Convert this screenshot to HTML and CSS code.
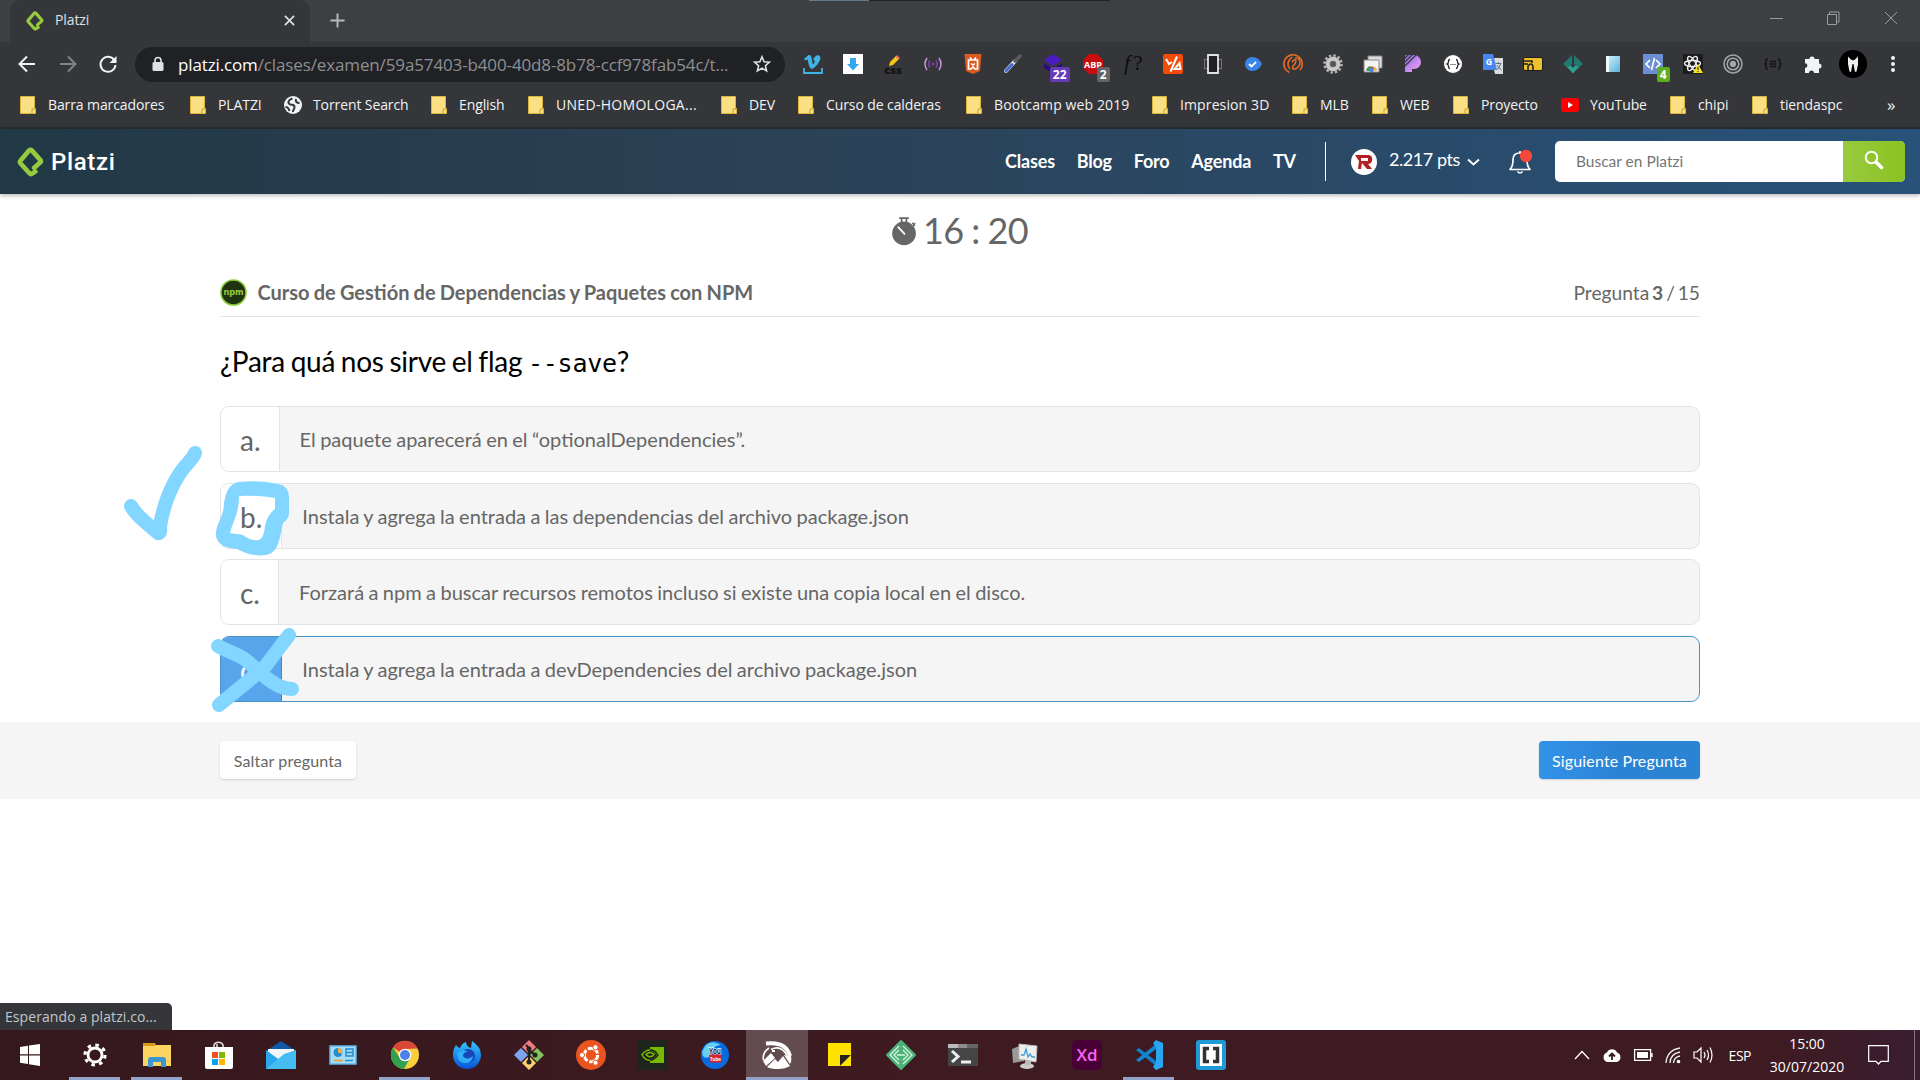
FILE: index.html
```html
<!DOCTYPE html>
<html lang="es">
<head>
<meta charset="utf-8">
<title>Platzi</title>
<link rel="stylesheet" href="styles.css">
</head>
<body>
<svg class="defs" width="0" height="0">
  <defs>
    <symbol id="platzi" viewBox="0 0 27 30"><path d="M17.200 20.800 L23.400 15.300 Q24.300 14.200 23.400 13.100 L15 3.600 Q13.500 2.200 12 3.600 L3.400 13.800 Q2.500 15 3.400 16.200 L12.400 26.200 Q14 27.800 15.600 26.200 L18.300 24.600" fill="none" stroke="#98ca3f" stroke-width="4.700" stroke-linejoin="round" stroke-linecap="round"/></symbol>
    <symbol id="folder" viewBox="0 0 16 18"><path d="M.5.500h14v12h1v5H.500z" fill="#fbe083" stroke="#d9b53c"/><path d="M12 17v-4h3" fill="none" stroke="#c9a227"/></symbol>
    <linearGradient id="peri" x1="0" y1="0" x2="1" y2="1"><stop offset="0" stop-color="#8b6cf0"/><stop offset="1" stop-color="#f6a6e8"/></linearGradient>
    <linearGradient id="fox" x1="0" y1="0" x2="0" y2="1"><stop offset="0" stop-color="#35c3ff"/><stop offset="1" stop-color="#0754d6"/></linearGradient>
    <linearGradient id="book" x1="0" y1="0" x2="1" y2="1"><stop offset="0" stop-color="#d8f3fb"/><stop offset="1" stop-color="#58b0dc"/></linearGradient>
  </defs>
</svg>

<header class="chrome">
  <div class="tabstrip">
    <div class="tab">
      <svg class="tab-logo" viewBox="0 0 27 30"><use href="#platzi"/></svg>
      <span class="tab-title">Platzi</span>
      <svg class="tab-close" viewBox="0 0 12 12"><path d="M1 1l10 10M11 1L1 11" stroke="#dfe1e5" stroke-width="1.800"/></svg>
    </div>
    <svg class="tab-new" viewBox="0 0 16 16"><path d="M8 .5v15M.5 8h15" stroke="#b8babd" stroke-width="2"/></svg>
    <div class="tab-drag"><i class="drag-a"></i><i class="drag-b"></i></div>
    <div class="win">
      <svg width="15" height="15"><path d="M0 8.500h13" stroke="#9a9c9e"/></svg>
      <svg width="15" height="15"><path d="M.5 4.500h9v10h-9zM2.500 4.500v-2.500h9.500v10h-2.500" fill="none" stroke="#9a9c9e"/></svg>
      <svg width="15" height="15"><path d="M1 2l12 12M13 2L1 14" stroke="#9a9c9e"/></svg>
    </div>
  </div>

  <div class="toolbar">
    <div class="nav">
      <svg viewBox="0 0 18 18"><path d="M17 9H2M9 1.500L1.500 9 9 16.500" fill="none" stroke="#f1f3f4" stroke-width="2"/></svg>
      <svg viewBox="0 0 18 18"><path d="M1 9h15M9 1.500L16.500 9 9 16.500" fill="none" stroke="#818386" stroke-width="2"/></svg>
      <svg viewBox="0 0 18 18"><path d="M15.500 5.500A7.500 7.500 0 1 0 16.500 10" fill="none" stroke="#f1f3f4" stroke-width="2"/><path d="M17.500 1v7h-7z" fill="#f1f3f4"/></svg>
    </div>
    <div class="omnibox">
      <svg class="lock" viewBox="0 0 12 16"><path d="M3 7V4.500a3 3 0 0 1 6 0V7" fill="none" stroke="#dfe1e5" stroke-width="1.600"/><rect x=".5" y="6" width="11" height="9" rx="1.500" fill="#dfe1e5"/></svg>
      <span class="url"><b>platzi.com</b>/clases/examen/59a57403-b400-40d8-8b78-ccf978fab54c/t...</span>
      <svg class="star" viewBox="0 0 18 18"><path d="M9 1.800l2.100 4.900 5.300.500-4 3.500 1.200 5.200L9 13.100l-4.600 2.800 1.200-5.200-4-3.500 5.300-.500z" fill="none" stroke="#dfe1e5" stroke-width="1.600"/></svg>
    </div>
    <div class="exts">
      <div class="ext"><svg viewBox="0 0 20 20"><path d="M1 5l4-3.500c3-1.500 3.500 1 4 5 .500 3 1 5 2 3s1-4-1-3c1-4 4-6 6-5s2 4-1 8c-3 4-5 6-7 5S5.500 9 4.500 5.500L2 6.500z" fill="#40b3e4"/><path d="M1 14v5h18v-5" fill="none" stroke="#40b3e4" stroke-width="1.800"/></svg></div>
      <div class="ext"><svg viewBox="0 0 20 20"><path d="M0 0h20v20H0z" fill="#fff"/><path d="M7 4h6v6h3l-6 6.500L4 10h3z" fill="#34a7ee"/></svg></div>
      <div class="ext"><svg viewBox="0 0 20 20"><path d="M6 12l1-4 6-6 3 3-6 6z" fill="#f5c518"/><path d="M12.500 2.500l1.500-1.500 3 3L15.500 5.500z" fill="#ef6a6a"/><text x="10" y="19.500" font-size="10" font-weight="800" text-anchor="middle" textLength="18" lengthAdjust="spacingAndGlyphs" fill="#111213">css</text></svg></div>
      <div class="ext"><svg viewBox="0 0 20 20" fill="none" stroke-width="1.500"><path d="M4 4q-4 6 0 12M16 4q4 6 0 12" stroke="#c995dc"/><path d="M7 6.500q-2.500 3.500 0 7M13 6.500q2.500 3.500 0 7" stroke="#8a3bad"/><circle cx="10" cy="10" r="1.300" fill="#8a3bad"/></svg></div>
      <div class="ext"><svg viewBox="0 0 20 20"><path d="M1.500 0h17l-1.500 17-7 3-7-3z" fill="#dd5b1c"/><path d="M5.500 6h9v9h-2.500l-2-2-2 2H5.500zM7 3.500l2 2.500M13 3.500L11 6" fill="none" stroke="#fff" stroke-width="1.700"/><path d="M8 9.500l2 1.500 2-1.500" fill="none" stroke="#fff" stroke-width="1.500"/></svg></div>
      <div class="ext"><svg viewBox="0 0 20 20"><path d="M3 17L12 7" stroke="#dce8ff" stroke-width="4" stroke-linecap="round"/><path d="M3 17l6-6.500" stroke="#3f68c7" stroke-width="2.800" stroke-linecap="round"/><path d="M12 7l5-5" stroke="#5a5c60" stroke-width="3.500" stroke-linecap="round"/></svg></div>
      <div class="ext"><svg viewBox="0 0 20 20"><path d="M10 0l9 6-9 6-9-6z" fill="#4a1bc0"/><path d="M1 9l9 6 9-6v5l-9 5-9-5z" fill="#2a0b80"/></svg><span class="badge purple">22</span></div>
      <div class="ext"><svg viewBox="0 0 20 20"><path d="M6 0h8l6 6v8l-6 6H6l-6-6V6z" fill="#c70d0d"/><text x="10" y="13.500" font-size="9.500" font-weight="700" text-anchor="middle" textLength="18" lengthAdjust="spacingAndGlyphs" fill="#fff">ABP</text></svg><span class="badge gray">2</span></div>
      <div class="ext"><svg viewBox="0 0 20 20"><text x="1" y="16" class="serif" font-size="22" fill="#0c0c0d"><tspan font-style="italic">f</tspan><tspan x="10">?</tspan></text></svg></div>
      <div class="ext"><svg viewBox="0 0 20 20"><rect width="20" height="20" rx="2" fill="#f34b0a"/><path d="M3 5l3 5 3-2M14 2.500L7.500 17.500M17.500 15h-6l5-6z" fill="none" stroke="#fff" stroke-width="2"/></svg></div>
      <div class="ext"><svg viewBox="0 0 20 20"><path d="M1.500 5.500h17v9h-17z" fill="none" stroke="#777"/><path d="M5 1h10v18H5z" fill="#202124" stroke="#e2e2e2" stroke-width="1.800"/></svg></div>
      <div class="ext"><svg viewBox="0 0 20 20"><path d="M9 3c5 0 8 3 10 7-2 4-5 7-10 7A7 7 0 0 1 9 3z" fill="#3a86e8"/><path d="M6 10l2.500 2.500L13 8" fill="none" stroke="#fff" stroke-width="1.800"/></svg></div>
      <div class="ext"><svg viewBox="0 0 20 20" fill="none" stroke="#ee6b25" stroke-width="1.500"><path d="M6.500 18.500A9.200 9.200 0 1 1 17 16"/><path d="M9 8q3-4 4-1 0 2-3 5-1 4 2 3 5-2 5-6.500T12 4M7 15Q2 9 9 3"/></svg></div>
      <div class="ext"><svg viewBox="0 0 20 20"><circle cx="10" cy="10" r="8.500" fill="none" stroke="#b4b4b4" stroke-width="2.500" stroke-dasharray="2.500 1.950"/><circle cx="10" cy="10" r="5.300" fill="#666" stroke="#c9c9c9" stroke-width="4"/><circle cx="10" cy="10" r="2.300" fill="#555"/></svg></div>
      <div class="ext"><svg viewBox="0 0 20 20"><path d="M5 2h14v12H5z" fill="#ddd" stroke="#888"/><path d="M1 6h15v12H1z" fill="#f3f3f3" stroke="#888"/><path d="M3 16a6 6 0 0 1 11 0z" fill="#d9443a"/><path d="M3.500 17a5 5 0 0 1 4-5v5z" fill="#33a457"/><path d="M13.500 17a5 5 0 0 0-3-4v4z" fill="#f6c435"/><circle cx="8.500" cy="16" r="2.200" fill="#4e82e8"/></svg></div>
      <div class="ext"><svg viewBox="0 0 20 20"><path d="M2 1h9a7 7 0 0 1 0 14H9v3H2z" fill="url(#peri)"/><path d="M1 9l9-9M1 5l5-5M1 13L13 1" stroke="#35363a" stroke-width="1.200"/></svg></div>
      <div class="ext"><svg viewBox="0 0 20 20"><circle cx="10" cy="10" r="9" fill="#fff"/><path d="M7 5.500q-1.500 0-1.500 2T4 10q1.500.500 1.500 2.500t1.500 2M13 5.500q1.500 0 1.500 2T16 10q-1.500.500-1.500 2.500t-1.500 2" fill="none" stroke="#222" stroke-width="1.300"/><path d="M7.500 10.500h1m1 0h1m1 0h1" stroke="#222"/></svg></div>
      <div class="ext"><svg viewBox="0 0 20 20"><path d="M8 4h12v16H12z" fill="#dadce0"/><path d="M0 0h10l4 16H0z" fill="#4a86ec"/><text x="6" y="11" font-size="9" font-weight="700" text-anchor="middle" fill="#fff">G</text><path d="M12.500 9.500h6M15.500 8v1.500M17.500 10q-1 4-4 6M14 11q2 4 4.500 5" fill="none" stroke="#61717b"/></svg></div>
      <div class="ext"><svg viewBox="0 0 20 20"><rect x=".5" y="3.500" width="19" height="13" rx="1.500" fill="#efc02c" stroke="#1d1d1d"/><path d="M1 7h8v2M1 10h4M5 16v-4q3-4 5 0v4" fill="none" stroke="#1d1d1d" stroke-width="1.500"/></svg></div>
      <div class="ext"><svg viewBox="0 0 20 20"><path d="M0 10l9-9v9l-4 4zM20 10l-9-9v9l4 4z" fill="#1f7a72"/><path d="M4 13l4-1.500 2 2.500 2-2.500 4 1.500-6 6.500z" fill="#2fa191"/></svg></div>
      <div class="ext"><svg viewBox="0 0 20 20"><path d="M3 2h14v16H3z" fill="url(#book)"/><path d="M3 2h3v16H3z" fill="#effafd"/></svg></div>
      <div class="ext"><svg viewBox="0 0 20 20"><path d="M0 0h20v20H0z" fill="#6b8fd2"/><path d="M7 6l-4 4 4 4M13 6l4 4-4 4M11.500 4l-3 12" fill="none" stroke="#fff" stroke-width="1.700"/></svg><span class="badge green">4</span></div>
      <div class="ext"><svg viewBox="0 0 20 20"><path d="M0 0h20v20H0z" fill="#1c1c1c"/><g fill="none" stroke="#eee" stroke-width="1.300"><ellipse cx="9.500" cy="9.500" rx="8" ry="3"/><ellipse cx="9.500" cy="9.500" rx="8" ry="3" transform="rotate(60 9.500 9.500)"/><ellipse cx="9.500" cy="9.500" rx="8" ry="3" transform="rotate(120 9.500 9.500)"/></g><path d="M15 10l5 9H10z" fill="#f7e21b"/><path d="M15 13v3m0 1v1" stroke="#222"/></svg></div>
      <div class="ext"><svg viewBox="0 0 20 20" fill="none" stroke="#a4a6a8"><circle cx="10" cy="10" r="9" stroke-width="1.500"/><circle cx="10" cy="10" r="5.800" stroke-width="1.500"/><circle cx="10" cy="10" r="2.800" fill="#a4a6a8"/></svg></div>
      <div class="ext"><svg viewBox="0 0 20 20" fill="none" stroke="#141415" stroke-width="1.500"><path d="M5 5q-2 0-2 2.500T1.500 10Q3 10 3 12.500T5 15M15 5q2 0 2 2.500t1.500 2.500Q17 10 17 12.500T15 15M7 7.500h6M7 10h6M7 12.500h6"/></svg></div>
      <div class="ext"><svg viewBox="0 0 20 20"><path d="M2 5h4.500a2.500 2.500 0 1 1 5 0H16v4.500a2.500 2.500 0 1 1 0 5V19h-5a2.500 2.500 0 0 0-5 0H2v-5a2.400 2.400 0 0 0 0-4.800z" fill="#f1f3f4"/></svg></div>
      <div class="ext"><svg class="avatar" viewBox="0 0 28 28"><circle cx="14" cy="14" r="14" fill="#000"/><path d="M9 6.500l3 3 2 1 2-1 3-3 0 8-1.500 7-1.500.500-1.500-8-1 0-1.500 8-1.500-.500L9 14z" fill="#eee"/></svg></div>
      <div class="ext"><svg viewBox="0 0 20 20" fill="#f1f3f4"><circle cx="10" cy="4" r="2"/><circle cx="10" cy="10" r="2"/><circle cx="10" cy="16" r="2"/></svg></div>
    </div>
  </div>

  <div class="bookmarks">
    <div class="bm"><svg><use href="#folder"/></svg>Barra marcadores</div>
    <div class="bm"><svg><use href="#folder"/></svg>PLATZI</div>
    <div class="bm site"><svg viewBox="0 0 18 18"><circle cx="9" cy="9" r="9" fill="#f1f3f4"/><path d="M8.500 2.500c-4 1-5 4-3 5.500s5 0 5 3-2 3-1.500 5M1.500 11q3 0 4 4M12 3q-1 4 3.500 4" fill="none" stroke="#35363a" stroke-width="2"/></svg>Torrent Search</div>
    <div class="bm"><svg><use href="#folder"/></svg>English</div>
    <div class="bm wide"><svg><use href="#folder"/></svg>UNED-HOMOLOGA...</div>
    <div class="bm"><svg><use href="#folder"/></svg>DEV</div>
    <div class="bm"><svg><use href="#folder"/></svg>Curso de calderas</div>
    <div class="bm semiwide"><svg><use href="#folder"/></svg>Bootcamp web 2019</div>
    <div class="bm semiwide"><svg><use href="#folder"/></svg>Impresion 3D</div>
    <div class="bm"><svg><use href="#folder"/></svg>MLB</div>
    <div class="bm"><svg><use href="#folder"/></svg>WEB</div>
    <div class="bm"><svg><use href="#folder"/></svg>Proyecto</div>
    <div class="bm site"><svg viewBox="0 0 18 18"><rect y="2" width="18" height="14" rx="3" fill="#f00"/><path d="M7 6l5 3-5 3z" fill="#fff"/></svg>YouTube</div>
    <div class="bm"><svg><use href="#folder"/></svg>chipi</div>
    <div class="bm"><svg><use href="#folder"/></svg>tiendaspc</div>
    <div class="more">»</div>
  </div>
</header>

<main class="page">
  <div class="site-header">
    <div class="brand"><svg viewBox="0 0 27 30"><use href="#platzi"/></svg><span>Platzi</span></div>
    <nav class="menu"><a>Clases</a><a>Blog</a><a>Foro</a><a>Agenda</a><a>TV</a></nav>
    <div class="user">
      <svg class="user-pic" viewBox="0 0 26 26"><circle cx="13" cy="13" r="13" fill="#fff"/><path d="M4 6h14q4 1 3 6-1 3-4 3l4 5h-5l-5-6-1 6H7l1-8z" fill="#b51f24"/><path d="M10 9h7v3h-7z" fill="#fff"/></svg>
      <span class="pts">2.217 pts</span>
      <svg class="caret" viewBox="0 0 13 8"><path d="M1 1.500l5.500 5 5.500-5" fill="none" stroke="#fff" stroke-width="2"/></svg>
    </div>
    <svg class="bell" viewBox="0 0 24 26"><path d="M1 20.500q3-3 3-10Q4 4 11 4t7 6.500q0 7 3 10z" fill="none" stroke="#fff" stroke-width="1.700" stroke-linejoin="round"/><path d="M8.500 22.500q2.500 3 5 0M11 4V2" stroke="#fff" stroke-width="1.700" fill="none"/><circle cx="17" cy="7" r="6.200" fill="#f5493b"/></svg>
    <div class="search">
      <span class="search-input">Buscar en Platzi</span>
      <span class="search-btn"><svg viewBox="0 0 20 20"><circle cx="7.500" cy="7.500" r="5.800" fill="none" stroke="#fff" stroke-width="2"/><path d="M12.500 12.500l5 5" stroke="#fff" stroke-width="3.600" stroke-linecap="round"/></svg></span>
    </div>
  </div>

  <div class="timer">
    <svg viewBox="0 0 26 30"><circle cx="12.500" cy="17" r="12.300" fill="#666"/><path d="M7.500 1h10M10 1v5M15 1v5" stroke="#666" stroke-width="1.800"/><path d="M21 6l3 3M22 9l2-3" stroke="#666" stroke-width="1.500"/><path d="M6.500 10.500l6.500 7" stroke="#fff" stroke-width="1.800" stroke-linecap="round"/></svg>
    <span>16 : 20</span>
  </div>

  <section class="exam">
    <div class="exam-head">
      <svg class="npm" viewBox="0 0 28 28"><circle cx="14" cy="14" r="13" fill="#1f3310" stroke="#8acb3c" stroke-width="1.600"/><text x="14" y="17" font-size="9" font-weight="700" text-anchor="middle" textLength="21" lengthAdjust="spacingAndGlyphs" fill="#98ca3f">npm</text></svg>
      <h2>Curso de Gestión de Dependencias y Paquetes con NPM</h2>
      <span class="count">Pregunta <b>3</b> / 15</span>
    </div>
    <h1>¿Para quá nos sirve el flag <code>--save</code>?</h1>
    <ul class="options">
      <li><span class="letter">a.</span><span class="answer">El paquete aparecerá en el “optionalDependencies”.</span></li>
      <li><span class="letter">b.</span><span class="answer">Instala y agrega la entrada a las dependencias del archivo package.json</span></li>
      <li><span class="letter">c.</span><span class="answer">Forzará a npm a buscar recursos remotos incluso si existe una copia local en el disco.</span></li>
      <li class="selected"><span class="letter">d.</span><span class="answer">Instala y agrega la entrada a devDependencies del archivo package.json</span></li>
    </ul>
  </section>

  <div class="exam-foot">
    <button class="skip">Saltar pregunta</button>
    <button class="next">Siguiente Pregunta</button>
  </div>

  <svg class="ink" viewBox="0 0 200 270">
    <g fill="none" stroke="#82d6ff" stroke-width="14" stroke-linecap="round" stroke-linejoin="round">
      <path d="M11 66 Q15 73 24 81 L38 93 Q41 94 40 87 C42 70 50 48 60 33 C66 24 73 19 75 13"/>
      <path d="M98 206 C108 212 116 213 126 220 C144 236 156 249 172 249"/>
      <path d="M169 195 L144 228 L99 265"/>
    </g>
    <path fill="#82d6ff" fill-rule="evenodd" d="M119 42 Q140 40 158 44 Q169 46 169 57 L169 74 Q168 80 163 83 L160 97 Q157 113 146 115 Q132 117 117 109 Q98 108 96 96 C95 84 104 78 104 63 Q107 43 119 42ZM119 56 Q137 55 155 58 L155 69 Q147 75 145 86 Q144 98 139 100 Q130 101 123 95 L110 93 C113 81 119 74 119 56Z"/>
  </svg>
  <div class="status">Esperando a platzi.co...</div>
</main>

<footer class="taskbar">
  <div class="tasks">
    <div class="task start"><svg viewBox="0 0 30 30"><path d="M5 7l8-1.200v8.500H5zM14 5.600L25 4v10.300H14zM5 15.500h8V24l-8-1.200zM14 15.500h11V26l-11-1.700z" fill="#fff"/></svg></div>
    <div class="task on"><svg viewBox="0 0 30 30"><circle cx="15" cy="15" r="7" fill="none" stroke="#fff" stroke-width="2.800"/><circle cx="15" cy="15" r="10" fill="none" stroke="#fff" stroke-width="3.200" stroke-dasharray="3.500 4.354"/></svg></div>
    <div class="task on"><svg viewBox="0 0 30 30"><path d="M1 3h12l2 4H1z" fill="#d99a1c"/><path d="M1 6l12 0 1-1h15v21H1z" fill="#fcd462"/><path d="M6 27v-7q0-3 3-3h12q3 0 3 3v7h-5v-5h-8v5z" fill="#3d96d2"/></svg></div>
    <div class="task"><svg viewBox="0 0 30 30"><path d="M10 9V5a5 5 0 0 1 9 0v4M13 8V4" fill="none" stroke="#ddd" stroke-width="1.600"/><path d="M1 7h28v20q0 2-2 2H3q-2 0-2-2z" fill="#fff"/><path d="M8 12h6v6H8z" fill="#f25022"/><path d="M15 12h6v6h-6z" fill="#7fba00"/><path d="M8 19h6v6H8z" fill="#00a4ef"/><path d="M15 19h6v6h-6z" fill="#ffb900"/></svg></div>
    <div class="task"><svg viewBox="0 0 30 30"><path d="M0 11L15 1l15 10z" fill="#1059a8"/><path d="M2 9h26v14H2z" fill="#f2f6fa"/><path d="M0 10l15 11 15-11v19H0z" fill="#2aa6ea"/><path d="M0 29l18-15 12-4v19z" fill="#46bdf2"/></svg></div>
    <div class="task"><svg viewBox="0 0 30 30"><path d="M2 6h26v18H2z" fill="#a7dcf6" stroke="#60b8e8" stroke-width="1.500"/><circle cx="10" cy="12.500" r="4.500" fill="#278bd0"/><path d="M10 12.500V8a4.500 4.500 0 0 1 4 6z" fill="#f5b43c"/><path d="M18 9h7v7h-7zM18 12.500h7" fill="none" stroke="#278bd0" stroke-width="1.500"/><path d="M6 20.500h9" stroke="#e79c2d" stroke-width="1.500"/><path d="M17 20.500h8" stroke="#278bd0" stroke-width="1.500"/></svg></div>
    <div class="task on"><svg viewBox="0 0 30 30"><circle cx="15" cy="15" r="14" fill="#f9cf3b"/><path d="M15 15L3 7.500A14 14 0 0 1 27.500 8.500L15 9z" fill="#da4637"/><path d="M3 7.500A14 14 0 0 0 14 29l6-11-10 0z" fill="#31a150"/><circle cx="15" cy="15" r="6.300" fill="#fff"/><circle cx="15" cy="15" r="5" fill="#4a82ea"/></svg></div>
    <div class="task"><svg viewBox="0 0 30 30"><path d="M4 5q2 3 4 3 2-5 6-6 0 4 5 6l1-7q9 6 9 14a14 14 0 0 1-28 0Q1 9 4 5z" fill="url(#fox)"/><circle cx="16" cy="16" r="7" fill="#1746b8"/><path d="M5 13q6-5 11-1-5 0-5 4 4 5 10 0-1 8-9 7Q5 22 5 13z" fill="#2faef6"/></svg></div>
    <div class="task"><svg viewBox="0 0 30 30"><path d="M15 0l7 7-7 7-7-7z" fill="#f17c80"/><path d="M7 8l7 7-7 7-7-7z" fill="#7ba5ec"/><path d="M23 8l7 7-7 7-7-7z" fill="#84c15f"/><path d="M15 16l7 7-7 7-7-7z" fill="#fbd173"/><path d="M12 5l3 3v16M15 10l6 5" fill="none" stroke="#222" stroke-width="2.200"/><circle cx="15" cy="9" r="2.500" fill="#222"/><circle cx="21" cy="15" r="2.500" fill="#222"/><circle cx="15" cy="22" r="2.500" fill="#222"/></svg></div>
    <div class="task"><svg viewBox="0 0 30 30"><circle cx="15" cy="15" r="15" fill="#e95420"/><circle cx="15" cy="15" r="6.700" fill="none" stroke="#fff" stroke-width="3" stroke-dasharray="12.200 1.830"/><g fill="#fff" stroke="#e95420"><circle cx="6" cy="15" r="2.600"/><circle cx="19.500" cy="7.300" r="2.600"/><circle cx="19.500" cy="22.700" r="2.600"/></g></svg></div>
    <div class="task"><svg viewBox="0 0 30 30"><path d="M0 0h30v30H0z" fill="#20251b"/><path d="M12 7h14v16H12z" fill="#76b900"/><path d="M4 15q6-8 12-4l4 4q-6 8-10 5-4-1-6-5z" fill="#20251b"/><path d="M4 14.500q6-7 12-3l4 3.500q-5 6-10 5-4-1-6-5.500zM8 14.500q4-4 8 0-4 4.500-8 0z" fill="none" stroke="#76b900" stroke-width="1.500"/><path d="M12 10q5 0 8 5-4 5-8 5" fill="none" stroke="#20251b" stroke-width="1.300"/></svg></div>
    <div class="task"><svg viewBox="0 0 30 30"><circle cx="15" cy="15" r="14" fill="#086adf"/><path d="M5 6q7-7 16-1-9 0-12 12Q3 20 2 12z" fill="#64cff5"/><text x="15" y="14" font-size="8.500" font-weight="700" text-anchor="middle" textLength="12" lengthAdjust="spacingAndGlyphs" fill="#222" stroke="#fff" stroke-width="1.500" paint-order="stroke">You</text><rect x="9" y="14.500" width="13" height="8" rx="2" fill="#d8232a"/><text x="15.500" y="21" font-size="6" font-weight="700" text-anchor="middle" textLength="11" lengthAdjust="spacingAndGlyphs" fill="#fff">Tube</text></svg></div>
    <div class="task on active"><svg viewBox="0 0 30 30"><path d="M4 3.500Q24 1 28 16" fill="none" stroke="#fff" stroke-width="4"/><path d="M7 8Q0 13 1.500 20M9 9.500q10-5 16 6" fill="none" stroke="#fff" stroke-width="1.600"/><path d="M10 10h3v2h-3z" fill="#fff"/><path d="M1 21l8-8 4 5-9 8zM5 27l8-8 3 3 5-6 7 10q-5 3-12 3t-11-2zM22 15l7 1q1 5-1 8z" fill="#fff"/></svg></div>
    <div class="task"><svg viewBox="0 0 30 30"><path d="M4 3h23v12l-11 11H4z" fill="#ffe100"/><path d="M16 26V15h11z" fill="#222"/><path d="M27 15v11H16z" fill="#ffe100"/></svg></div>
    <div class="task"><svg viewBox="0 0 30 30"><path d="M15 1l14 14-14 14L1 15z" fill="#4cb277" stroke="#4cb277" stroke-width="2" stroke-linejoin="round"/><path d="M13 6l-9 9 9 9M17 6l9 9-9 9M13 10l-5 5 5 5M17 10l5 5-5 5M11 15h8" fill="none" stroke="#d8f4df" stroke-width="1.300"/></svg></div>
    <div class="task"><svg viewBox="0 0 30 30"><path d="M0 4h30v22H0z" fill="#454545"/><path d="M0 4h10v4H0z" fill="#bbb"/><path d="M10 4h9v4h-9z" fill="#8d8d8d"/><path d="M19 4h11v4H19z" fill="#666"/><path d="M4 11l6 5.500L4 22M13 22h10" fill="none" stroke="#eee" stroke-width="3"/></svg></div>
    <div class="task"><svg viewBox="0 0 30 30"><path d="M2 9l10-4 2 16-11 2z" fill="#999"/><path d="M9 4l18 2-1 16-17-3z" fill="#eee" stroke="#bbb"/><path d="M11 15l3 0 2-6 2 8 2-3 2 3 3 0" fill="none" stroke="#3a9cd5" stroke-width="1.300"/><ellipse cx="17" cy="26" rx="7" ry="3" fill="#ccc"/><path d="M15 21h6v4h-6z" fill="#bbb"/></svg></div>
    <div class="task"><svg viewBox="0 0 30 30"><rect width="30" height="30" rx="5" fill="#470137"/><text x="15" y="21" font-size="16" font-weight="600" text-anchor="middle" textLength="21" lengthAdjust="spacingAndGlyphs" fill="#ff61f6">Xd</text></svg></div>
    <div class="task on"><svg viewBox="0 0 30 30"><path d="M2 10l20 16V21L5 8z" fill="#0f7fc8"/><path d="M2 20L22 4v5L5 22z" fill="#1387d2"/><path d="M22 0l7 3v24l-7 3-3-3 3-5V8l-3-5z" fill="#29a5f2"/></svg></div>
    <div class="task"><svg viewBox="0 0 30 30"><rect width="30" height="30" rx="3" fill="#1e9bd7"/><path d="M4 4h22v22H4z" fill="#fff"/><path d="M13 8.500H8.500v13H13M17 8.500h4.500v13H17" fill="none" stroke="#333" stroke-width="3.500"/></svg></div>
  </div>
  <div class="tray">
    <svg width="16" height="10" viewBox="0 0 16 10"><path d="M1 9l7-7.500L15 9" fill="none" stroke="#fff" stroke-width="1.300"/></svg>
    <svg width="20" height="14" viewBox="0 0 20 14"><path d="M5 14a5 5 0 0 1 0-9.500 5.500 5.500 0 0 1 10 0A5 5 0 0 1 15 14z" fill="#fff"/><path d="M10 12V6M7 8.500l3-3 3 3" fill="none" stroke="#3a1a20" stroke-width="1.800"/></svg>
    <svg width="19" height="12" viewBox="0 0 19 12"><path d="M.6.600h16v10.800h-16zM18 4v4" fill="none" stroke="#fff" stroke-width="1.300"/><path d="M3 3h11v6H3z" fill="#fff"/></svg>
    <svg width="16" height="17" viewBox="0 0 16 17" fill="none" stroke="#eee" stroke-width="1.300"><path d="M1 16Q2 3 15 1M5 16Q5 7 15 5M8.500 16Q9 10 15 9"/><circle cx="13.500" cy="14.500" r="1.200" fill="#fff"/></svg>
    <svg width="21" height="18" viewBox="0 0 21 18" fill="none" stroke="#fff" stroke-width="1.200"><path d="M1 6h3l4-4v14l-4-4H1zM11 6q2 3 0 6M14 4q3 5 0 10M17 1.500q4 7.500 0 15"/></svg>
    <span class="lang">ESP</span>
    <span class="clock">15:00<br>30/07/2020</span>
    <svg class="notif" width="21" height="20" viewBox="0 0 21 20"><path d="M.7.700h19.600v15.600h-7.300l-2.500 2.700-2.500-2.700H.7z" fill="none" stroke="#fff" stroke-width="1.200"/></svg>
    <i class="peek"></i>
  </div>
</footer>
</body>
</html>
```
FILE: styles.css
```css
* { box-sizing: border-box; }
body {
  margin: 0;
  width: 1920px;
  height: 1080px;
  overflow: hidden;
  display: flex;
  flex-direction: column;
  background: #fff;
  font-family: "Open Sans", "Noto Sans", sans-serif;
}
svg { display: block; flex: none; overflow: visible; }
.defs { position: absolute; }
.serif { font-family: "Liberation Serif", serif; }

/* Browser chrome */
.chrome { background: #35363a; height: 129px; flex: none; border-bottom: 2px solid #292a2d; }
.tabstrip { height: 42px; background: #3c4043; display: flex; padding-left: 10px; }
.tab {
  width: 300px; height: 42px; padding: 0 15px 1px 16px;
  background: #35363a; border-radius: 10px 10px 0 0;
  display: flex; align-items: center;
}
.tab-logo { width: 18px; height: 20px; margin-right: 11px; }
.tab-title { font-size: 14px; letter-spacing: -.1px; line-height: 20px; padding-bottom: 1px; color: #dfe1e5; flex: 1; }
.tab-close { width: 11px; height: 11px; }
.tab-new { width: 15px; height: 15px; margin: 13px 0 0 20px; }
.tab-drag { display: flex; height: 1px; margin-left: 464px; width: 301px; }
.drag-a { width: 60px; background: #66788a; }
.drag-b { flex: 1; background: #222326; }
.win { margin-left: auto; display: flex; gap: 42px; padding: 10px 21px 0 0; }
.toolbar { height: 43px; display: flex; align-items: center; padding-top: 1px; }
.nav { display: flex; gap: 22.500px; width: 135px; padding-left: 18px; }
.nav svg { width: 18px; height: 18px; }
.omnibox {
  width: 650px; height: 35px; border-radius: 18px; background: #202124;
  display: flex; align-items: center; padding: 0 14px 0 17px;
}
.lock { width: 12px; height: 16px; }
.url { margin-left: 14px; flex: 1; white-space: nowrap; font-size: 17px; letter-spacing: -.13px; color: #8d9093; }
.url b { font-weight: 400; color: #fff; }
.star { width: 18px; height: 18px; }
.exts { display: grid; grid-template-columns: repeat(28, 40px); margin-left: 7.500px; }
.ext { height: 40px; display: flex; align-items: center; justify-content: center; position: relative; }
.ext svg { width: 20px; height: 20px; }
.ext .avatar { width: 28px; height: 28px; }
.badge {
  position: absolute; right: 3px; bottom: 2px; padding: 0 3px; height: 15px; border-radius: 2px;
  font-size: 12px; line-height: 15px; font-weight: 700; color: #fff;
}
.purple { background: #673ab7; }
.gray { background: #636568; }
.green { background: #5fae1b; }
.bookmarks {
  height: 42px; padding: 0 0 4px 20px; display: grid; align-items: center; color: #f1f3f4;
  grid-template-columns: 170px 94px 147px 97px 193px 77px 168px 186px 140px 80px 81px 108px 109px 82px 135px 30px;
  font-size: 14px; letter-spacing: -.1px;
}
.bm { display: flex; align-items: center; gap: 12px; white-space: nowrap; }
.bm svg { width: 16px; height: 18px; position: relative; top: 1px; }
.bm.site { gap: 11px; }
.bm.site svg { width: 18px; }
.bm.wide { letter-spacing: .3px; }
.bm.semiwide { letter-spacing: .12px; }
.more { font-size: 17px; }

/* Page */
.page { height: 901px; position: relative; font-family: Lato, sans-serif; color: #666; }
.site-header {
  height: 65px; display: flex; align-items: center; color: #fff; padding: 0 15px 0 17px;
  background: linear-gradient(90deg, #213845, #2b4155 40%, #28527a);
  box-shadow: 0 2px 4px rgba(0, 0, 0, .25);
}
.brand { display: flex; align-items: center; gap: 7px; width: 988px; }
.brand svg { width: 27px; height: 30px; }
.brand span { font: 500 24px/30px Roboto, Lato, sans-serif; letter-spacing: .65px; }
.menu { display: flex; gap: 21.800px; width: 320px; padding-bottom: 2px; font-size: 18px; font-weight: 700; letter-spacing: -.18px; }
.user { display: flex; align-items: center; width: 184px; height: 39px; border-left: 1px solid #fff; padding-left: 25px; }
.user-pic { width: 26px; height: 26px; }
.pts { font-size: 18px; margin: -5px 7px 0 12px; letter-spacing: -.45px; }
.caret { width: 13px; height: 8px; }
.bell { width: 24px; height: 26px; }
.search { margin-left: auto; width: 350px; height: 41px; display: flex; border-radius: 5px; overflow: hidden; background: #fff; }
.search-input { flex: 1; padding-left: 21px; font-size: 15.500px; line-height: 41px; color: #757575; }
.search-btn { width: 62px; background: linear-gradient(90deg, #98ca3f, #8bc220); padding: 9px 0 0 21px; }
.search-btn svg { width: 20px; height: 20px; }

.timer { height: 68px; display: flex; justify-content: center; align-items: center; gap: 6px; padding-top: 4px; font-size: 36px; }
.timer svg { width: 25px; height: 29px; position: relative; top: 1px; }
.timer span { letter-spacing: -.6px; word-spacing: -.800px; }
.exam { width: 1480px; margin: 0 auto; word-spacing: -.700px; }
.exam-head { height: 55px; display: flex; align-items: center; padding-top: 6px; border-bottom: 1px solid #e5e5e5; }
.npm { width: 27px; height: 27px; margin-right: 10.500px; font-family: "DejaVu Sans", sans-serif; }
.exam h2 { margin: 0; font-size: 20px; font-weight: 700; }
.count { margin-left: auto; font-size: 19.200px; word-spacing: -2px; }
.exam h1 { margin: 24px 0 24px; font-size: 28px; line-height: 41px; font-weight: 400; color: #000; letter-spacing: -.25px; word-spacing: -1.200px; }
.exam code { font: 25px/36px "DejaVu Sans Mono", monospace; }
.options { list-style: none; margin: 0; padding: 0; display: grid; grid-auto-rows: 66px; gap: 10.600px; }
.options li { border: 1px solid #e4e4e4; border-radius: 9px; background: #f5f5f5; display: flex; overflow: hidden; }
.letter { background: #fff; border-right: 1px solid #e4e4e4; padding: 0 18px 0 19px; font-size: 28px; line-height: 66px; }
.options li:nth-child(even) .letter { padding-right: 19px; }
.answer { padding-left: 20px; font-size: 20px; line-height: 64px; }
.options .selected { border-color: #4a93c8; }
.selected .letter { background: #59a5ec; color: #fff; border-color: #3c8ad0; }
.exam-foot { margin-top: 20.200px; height: 77px; padding: 0 220px 1px; background: #f5f5f5; display: flex; justify-content: space-between; align-items: center; }
.exam-foot button { height: 38px; border: 0; border-radius: 4px; font: 16px/37px Lato, sans-serif; letter-spacing: .15px; padding: 1px 0 0; box-shadow: 0 1px 2px rgba(0, 0, 0, .15); }
.exam-foot .skip { width: 136px; background: #fff; color: #666; }
.exam-foot .next { width: 161px; background: linear-gradient(90deg, #3293e9, #2b83d4 50%); color: #fff; }
/* hand-drawn marks over the answers */
.ink { position: absolute; left: 120px; top: 311px; width: 200px; height: 270px; }
.status {
  position: absolute; left: 0; bottom: 0; width: 172px; height: 27px; padding-left: 5px;
  background: #35363a; color: #c3c7cb; border-top-right-radius: 5px;
  font: 14px/27px "Open Sans", sans-serif; letter-spacing: .08px; white-space: nowrap;
}

/* Taskbar */
.taskbar { height: 50px; display: flex; justify-content: space-between; background: linear-gradient(90deg, #35181d, #3e1b21 50%, #3e1b23 93%, #3a1d30); }
.tasks { display: flex; }
.task { width: 62px; height: 50px; padding-top: 10px; display: flex; flex-direction: column; align-items: center; }
.task svg { width: 30px; height: 30px; }
.start { width: 63.500px; padding-right: 4px; }
.task.on::after { content: ""; width: 51px; height: 3px; margin-top: 7px; background: #93a2c8; }
.active { background: #624c50; }
.task.active::after { width: 62px; }
.tray { display: flex; align-items: center; color: #fff; font-size: 14px; }
.tray svg { margin-right: 12px; }
.lang { letter-spacing: -.5px; margin: 0 18px 0 3px; }
.clock { width: 76px; text-align: center; line-height: 23px; letter-spacing: 0; margin-right: 23px; white-space: nowrap; }
.tray .notif { margin-right: 25px; }
.peek { width: 6px; height: 50px; border-left: 1px solid #8b7783; }
```
